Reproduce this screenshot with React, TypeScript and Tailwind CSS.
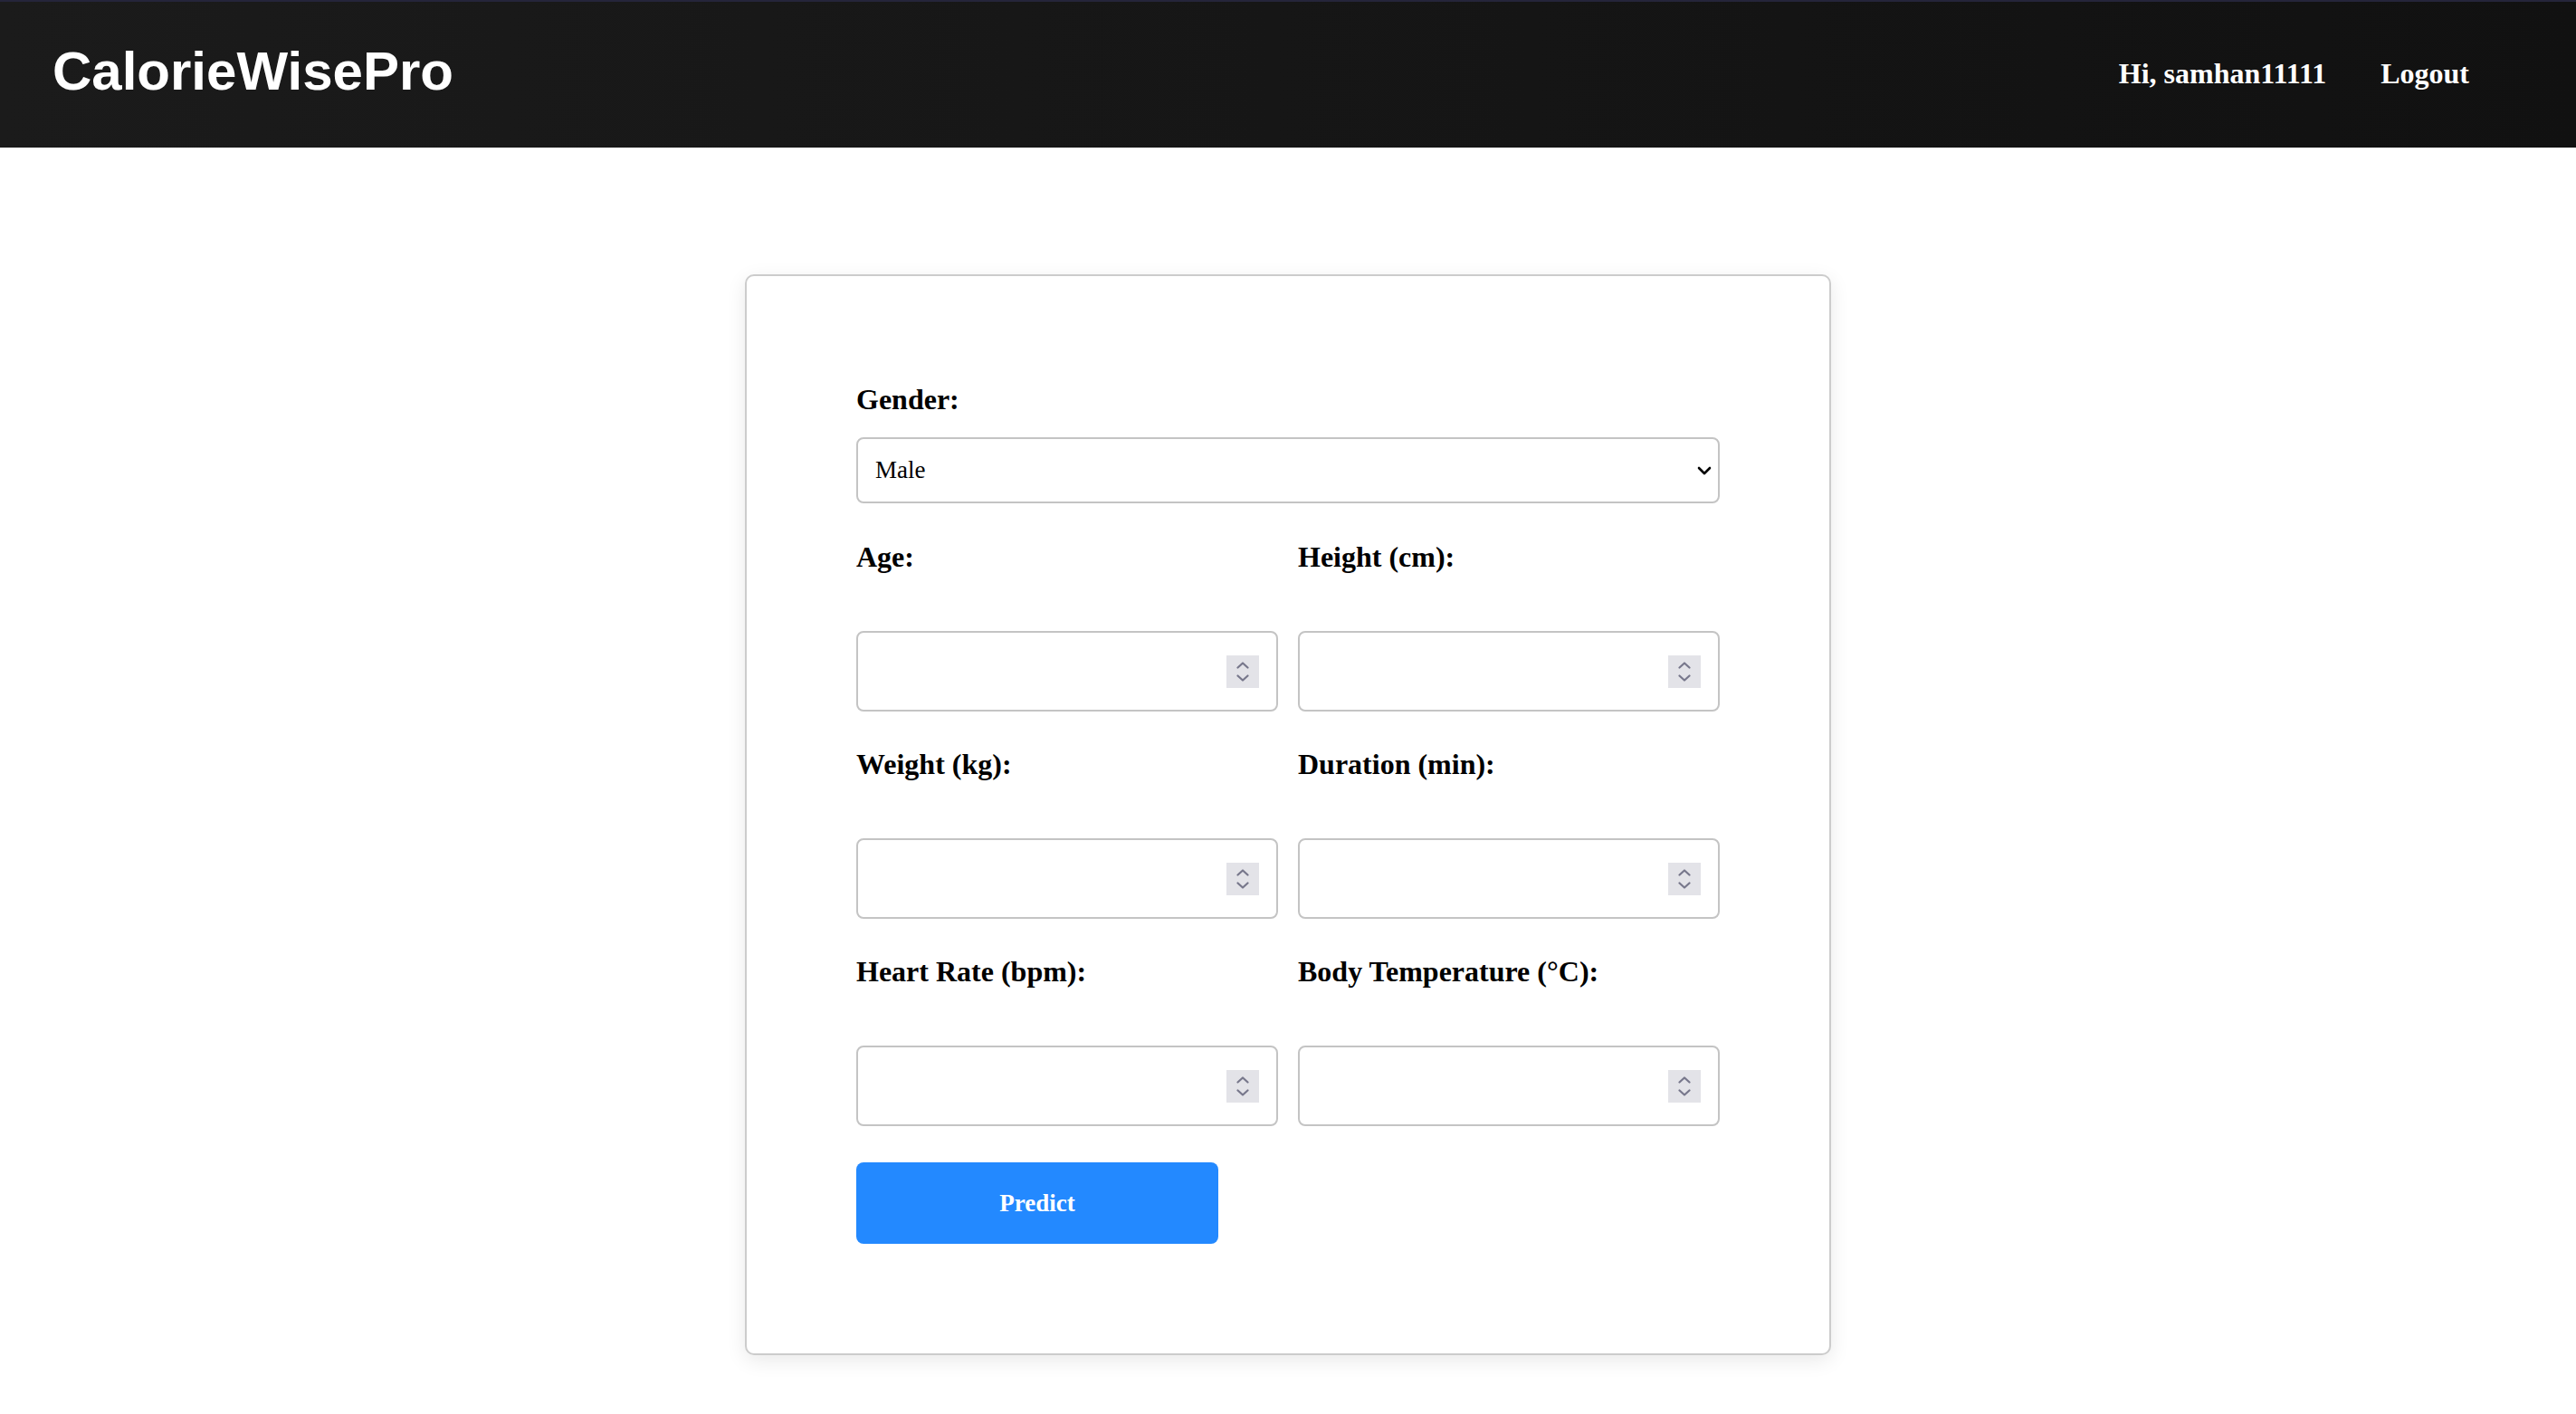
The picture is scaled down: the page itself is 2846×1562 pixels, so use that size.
import React from "react";

const serif = "font-['Liberation_Serif','Times_New_Roman',serif]";

const Spinner = () => (
  <div className="w-[36px] h-[36px] bg-[#e3e3e8] flex flex-col items-center justify-center gap-[6px]">
    <svg width="14" height="8" viewBox="0 0 14 8" fill="none">
      <path d="M1.5 6.5 L7 1.5 L12.5 6.5" stroke="#77778b" strokeWidth="2.2" strokeLinecap="round" strokeLinejoin="round" />
    </svg>
    <svg width="14" height="8" viewBox="0 0 14 8" fill="none">
      <path d="M1.5 1.5 L7 6.5 L12.5 1.5" stroke="#77778b" strokeWidth="2.2" strokeLinecap="round" strokeLinejoin="round" />
    </svg>
  </div>
);

const NumberField = ({ label }: { label: string }) => (
  <div className="flex flex-col">
    <label className="text-[32px] leading-[36px] font-bold text-black">{label}</label>
    <div className="mt-[64px] h-[89px] flex items-center border-2 border-[#c4c4c4] rounded-[8px] pl-[19px] pr-[19px] bg-white">
      <input type="text" inputMode="numeric" className={`flex-1 min-w-0 bg-transparent outline-none text-[27px] ${serif}`} />
      <Spinner />
    </div>
  </div>
);

export default function App() {
  const rows: [string, string][] = [
    ["Age:", "Height (cm):"],
    ["Weight (kg):", "Duration (min):"],
    ["Heart Rate (bpm):", "Body Temperature (°C):"],
  ];

  return (
    <div className={`min-h-screen bg-white ${serif}`}>
      {/* Navbar */}
      <nav className="h-[163px] border-t-2 border-[#25253a] bg-linear-to-r from-[#1b1b1b] to-[#111111] flex items-center justify-between pl-[58px] pr-[118px]">
        <h1 className="font-['Liberation_Sans',Arial,sans-serif] font-bold text-[60px] leading-none text-white pb-[7px]">
          CalorieWisePro
        </h1>
        <div className="flex items-center gap-[60px] text-white font-bold text-[32px] leading-[36px] pb-[3px]">
          <span>Hi, samhan11111</span>
          <a href="#" className="text-white">Logout</a>
        </div>
      </nav>

      {/* Form card */}
      <main className="flex justify-center pt-[140px] pb-[60px]">
        <div className="w-[1200px] border-2 border-[#cccccc] rounded-[10px] shadow-[0_6px_22px_rgba(0,0,0,0.09)] bg-white px-[121px] pt-[118px] pb-[121px]">
          <form className="flex flex-col" onSubmit={(e) => e.preventDefault()}>
            <label className="text-[32px] leading-[36px] font-bold text-black">Gender:</label>
            <div className="mt-[24px] h-[73px] flex items-center border-2 border-[#c4c4c4] rounded-[8px] pl-[19px] pr-[7px] bg-white">
              <select className={`flex-1 appearance-none bg-transparent outline-none text-[27px] text-black ${serif}`} defaultValue="Male">
                <option>Male</option>
                <option>Female</option>
              </select>
              <svg width="16" height="10" viewBox="0 0 16 10" fill="none">
                <path d="M2 2 L8 8 L14 2" stroke="#000" strokeWidth="2.6" strokeLinecap="round" strokeLinejoin="round" />
              </svg>
            </div>

            {rows.map(([a, b], i) => (
              <div key={a} className={`grid grid-cols-2 gap-x-[22px] ${i === 0 ? "mt-[41px]" : "mt-[40px]"}`}>
                <NumberField label={a} />
                <NumberField label={b} />
              </div>
            ))}

            <button
              type="submit"
              className="mt-[40px] w-[400px] h-[90px] bg-[#2389ff] rounded-[8px] text-white font-bold text-[27px]"
            >
              Predict
            </button>
          </form>
        </div>
      </main>
    </div>
  );
}
